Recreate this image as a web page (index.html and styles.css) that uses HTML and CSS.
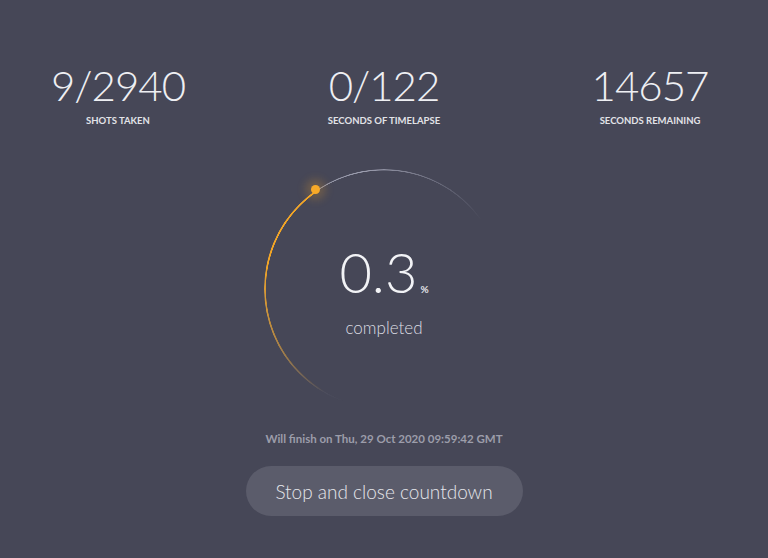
FILE: index.html
```html
<!DOCTYPE html>
<html>
<head>
<meta charset="utf-8">
<link rel="stylesheet" href="styles.css">
</head>
<body>
<main class="page">
  <section class="stats">
    <div class="stat">
      <div class="stat-value">9/2940</div>
      <div class="stat-label">SHOTS TAKEN</div>
    </div>
    <div class="stat">
      <div class="stat-value">0/122</div>
      <div class="stat-label">SECONDS OF TIMELAPSE</div>
    </div>
    <div class="stat">
      <div class="stat-value">14657</div>
      <div class="stat-label">SECONDS REMAINING</div>
    </div>
  </section>

  <section class="progress">
    <div class="ring-track"></div>
    <div class="ring-fill"></div>
    <div class="ring-dot"></div>
    <div class="progress-value"><span class="pct">0.3</span><span class="pct-sign">%</span></div>
    <div class="progress-label">completed</div>
  </section>

  <p class="finish">Will finish on Thu, 29 Oct 2020 09:59:42 GMT</p>
  <button class="stop">Stop and close countdown</button>
</main>
</body>
</html>
```

FILE: styles.css
```css
html, body {
  margin: 0;
  padding: 0;
  background: #464757;
  font-family: Lato, "Open Sans", sans-serif;
  color: #ecedf2;
}

.page {
  width: 768px;
  height: 558px;
  display: flex;
  flex-direction: column;
  align-items: center;
  overflow: hidden;
}

.stats {
  display: grid;
  grid-template-columns: repeat(3, 236px);
  column-gap: 30px;
  padding-top: 60px;
}

.stat {
  display: flex;
  flex-direction: column;
  align-items: center;
}

.stat-value {
  font-family: "Lato Light", Lato, sans-serif;
  font-size: 42px;
  font-weight: 300;
  line-height: 50px;
  letter-spacing: -1px;
  color: #eeeff3;
}

.stat-label {
  margin-top: 5px;
  font-size: 9.5px;
  font-weight: 700;
  line-height: 12px;
  color: #e2e3e8;
}

.progress {
  position: relative;
  box-sizing: border-box;
  margin-top: 42px;
  width: 240px;
  height: 240px;
  padding-top: 73px;
  border-radius: 50%;
  display: flex;
  flex-direction: column;
  align-items: center;
}

.ring-track,
.ring-fill {
  position: absolute;
  inset: 0;
  border-radius: 50%;
}

.ring-track {
  background: conic-gradient(from 200deg,
    rgba(170,172,190,0) 0deg,
    rgba(170,172,190,0.25) 40deg,
    rgba(185,187,204,0.75) 150deg,
    rgba(170,172,190,0.3) 190deg,
    rgba(170,172,190,0) 215deg,
    rgba(170,172,190,0) 360deg);
  -webkit-mask: radial-gradient(closest-side, transparent 118.3px, #000 118.8px, #000 119.7px, transparent 120.2px);
  mask: radial-gradient(closest-side, transparent 118.3px, #000 118.8px, #000 119.7px, transparent 120.2px);
}

.ring-fill {
  background: conic-gradient(from 210deg,
    rgba(245,166,35,0) 0deg,
    rgba(245,166,35,0.55) 35deg,
    rgba(245,166,35,1) 75deg,
    rgba(245,166,35,1) 115deg,
    rgba(245,166,35,0) 115.2deg,
    rgba(245,166,35,0) 360deg);
  -webkit-mask: radial-gradient(closest-side, transparent 117.8px, #000 118.3px, #000 120px, transparent 120.5px);
  mask: radial-gradient(closest-side, transparent 117.8px, #000 118.3px, #000 120px, transparent 120.5px);
}

.ring-dot {
  position: absolute;
  left: 47px;
  top: 16px;
  width: 9px;
  height: 9px;
  border-radius: 50%;
  background: #f7a928;
  box-shadow: 0 0 8px 6px rgba(245,166,35,0.22);
}

.progress-value {
  display: flex;
  align-items: baseline;
}

.pct {
  font-family: "Lato Light", Lato, sans-serif;
  font-size: 56px;
  font-weight: 300;
  line-height: 60px;
  color: #f2f3f6;
}

.pct-sign {
  font-size: 10px;
  font-weight: 700;
  margin-left: 3px;
  color: #e2e3e8;
}

.progress-label {
  margin-top: 16px;
  font-family: "Lato Light", Lato, sans-serif;
  font-size: 17px;
  font-weight: 300;
  line-height: 20px;
  color: #dcdde3;
}

.finish {
  margin: 23px 0 0;
  font-size: 11.5px;
  font-weight: 700;
  line-height: 14px;
  color: #9c9daa;
}

.stop {
  margin-top: 20px;
  width: 277px;
  height: 50px;
  border: none;
  border-radius: 25px;
  background: #5b5c6b;
  color: #e6e7ec;
  font-family: "Lato Light", Lato, sans-serif;
  font-size: 19px;
  font-weight: 300;
  padding: 0;
}
```
